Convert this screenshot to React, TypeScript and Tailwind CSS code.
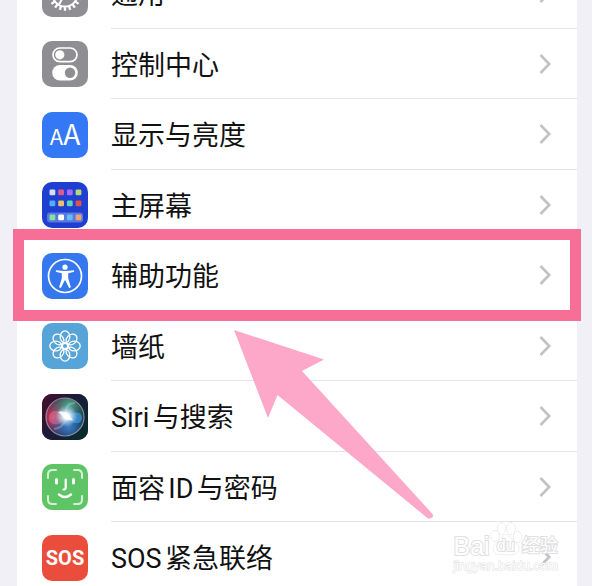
import type { ReactNode } from "react";

function GearIcon() {
  const teeth = Array.from({ length: 20 }, (_, i) => i * 18);
  return (
    <svg viewBox="0 0 46 46" className="size-full" fill="none" stroke="#fff">
      {teeth.map((a) => (
        <path key={a} d="M23 35.500v4.300" strokeWidth="2.400" transform={`rotate(${a} 23 23)`} />
      ))}
      <circle cx="23" cy="23" r="12.500" strokeWidth="2" />
      <circle cx="23" cy="23" r="5" strokeWidth="2" />
      <path d="M28 23h8M20.500 18.700l-4-6.900M20.500 27.300l-4 6.900" strokeWidth="2" />
    </svg>
  );
}

function TogglesIcon() {
  return (
    <svg viewBox="0 0 46 46" className="size-full">
      <rect x="11" y="7" width="24" height="13.600" rx="6.800" fill="none" stroke="#fff" strokeWidth="1.700" />
      <circle cx="17.800" cy="13.800" r="4.600" fill="#fff" />
      <rect x="10.200" y="24" width="25.600" height="15.400" rx="7.700" fill="#fff" />
      <circle cx="28" cy="31.700" r="5.200" fill="#8e8e93" />
    </svg>
  );
}

function HomeScreenIcon() {
  const rows = [
    ["#d9dcf5", "#e45a86", "#a96bf5", "#b3d977"],
    ["#4fb0f7", "#f0bd6a", "#63d3b4", "#e0524f"],
    ["#86e39a", "#ffffff", "#5fc0f5", "#efa273"],
  ];
  const tops = [7.5, 18.5, 32.5];
  return (
    <svg viewBox="0 0 46 46" className="size-full">
      <rect x="5" y="30.500" width="36" height="10" rx="3" fill="#5a79e0" />
      {rows.map((row, r) =>
        row.map((c, i) => (
          <rect key={c} x={7.5 + i * 8.7} y={tops[r]} width="5.800" height="5.800" rx="1.300" fill={c} />
        )),
      )}
    </svg>
  );
}

function AccessibilityIcon() {
  return (
    <svg viewBox="0 0 46 46" className="size-full" fill="#fff">
      <circle cx="23" cy="23" r="16.500" fill="none" stroke="#fff" strokeWidth="1.700" />
      <circle cx="23" cy="14.200" r="2.600" />
      <path d="M14.800 17.300q4.200 .6 8.200 .6t8.200-.6a.9.900 0 0 1 .2 1.800l-5.200 1.100v5l2.500 8.300a1 1 0 0 1-2 .7L23.400 27.500h-.8l-3.300 6.700a1 1 0 0 1-2-.7l2.500-8.300v-5l-5.200-1.100a.9.900 0 0 1 .2-1.800z" />
    </svg>
  );
}

function FlowerIcon() {
  const petals = Array.from({ length: 8 }, (_, i) => i * 45);
  return (
    <svg viewBox="0 0 46 46" className="size-full" fill="none" stroke="#fff" strokeWidth="1.300">
      {petals.map((a) => (
        <ellipse key={a} cx="23" cy="13.800" rx="4.800" ry="6" transform={`rotate(${a} 23 23)`} />
      ))}
      <circle cx="23" cy="23" r="2.700" />
    </svg>
  );
}

function SiriIcon() {
  return (
    <svg viewBox="0 0 46 46" className="size-full">
      <defs>
        <linearGradient id="siri-bg" x1="0" y1="0" x2="1" y2="0.600">
          <stop offset="0" stopColor="#4a0d2c" />
          <stop offset="0.500" stopColor="#1c1a38" />
          <stop offset="1" stopColor="#0a2a30" />
        </linearGradient>
        <radialGradient id="siri-red" cx="0.200" cy="0.500" r="0.520">
          <stop offset="0" stopColor="#e03a68" />
          <stop offset="1" stopColor="#e03a68" stopOpacity="0" />
        </radialGradient>
        <radialGradient id="siri-green" cx="0.600" cy="0.200" r="0.550">
          <stop offset="0" stopColor="#58ab94" />
          <stop offset="1" stopColor="#3f9a80" stopOpacity="0" />
        </radialGradient>
        <radialGradient id="siri-blue" cx="0.600" cy="0.750" r="0.550">
          <stop offset="0" stopColor="#3a80cc" />
          <stop offset="1" stopColor="#2f78c8" stopOpacity="0" />
        </radialGradient>
        <radialGradient id="siri-glow">
          <stop offset="0" stopColor="#fff" />
          <stop offset="0.300" stopColor="#eefcff" stopOpacity="0.900" />
          <stop offset="1" stopColor="#b8e8ff" stopOpacity="0" />
        </radialGradient>
      </defs>
      <rect width="46" height="46" fill="url(#siri-bg)" />
      <circle cx="23" cy="23" r="19" fill="url(#siri-red)" />
      <circle cx="23" cy="23" r="19" fill="url(#siri-green)" />
      <circle cx="23" cy="23" r="19" fill="url(#siri-blue)" />
      <circle cx="23" cy="23" r="19" fill="none" stroke="#c6b5c5" strokeOpacity="0.650" strokeWidth="1.200" />
      <path d="M25 24C20 16 8 14 7 23s11 10 18 1z" fill="#f07f98" fillOpacity="0.400" />
      <path d="M25 23c6-6 15-6 15 1s-10 7-15-1z" fill="#4aa4ee" fillOpacity="0.600" />
      <path d="M25 23C22 14 26 9 33 9M25 23c-3 8-8 12-13 12" stroke="#a9dcd5" strokeOpacity="0.350" strokeWidth="2" fill="none" />
      <circle cx="24.500" cy="22" r="11" fill="url(#siri-glow)" />
      <path d="M16 18q6-2 10 2 3 3 5 6-5 1-8-1-3-4-7-7z" fill="#fff" fillOpacity="0.800" />
    </svg>
  );
}

function FaceIcon() {
  return (
    <svg viewBox="0 0 46 46" className="size-full" fill="none" stroke="#fff" strokeLinecap="round">
      <path
        d="M6 14v-3.500q0-4.500 4.500-4.500H14M32 6h3.500q4.500 0 4.500 4.500V14M40 32v3.500q0 4.500-4.500 4.500H32M14 40h-3.500Q6 40 6 35.500V32"
        strokeWidth="2"
        strokeOpacity="0.750"
      />
      <path d="M14.500 15.500v3.500M31.500 15.500v3.500" strokeWidth="3" />
      <path d="M23.700 15.500v8q0 2-2.200 2" strokeWidth="2.200" />
      <path d="M17 30.500q6 5 12 0" strokeWidth="2.400" />
    </svg>
  );
}

function LettersIcon() {
  return (
    <span className="flex items-baseline pb-1 font-['Noto_Sans_CJK_SC',sans-serif] leading-none text-white">
      <span className="text-[22px]">A</span>
      <span className="text-[28px]">A</span>
    </span>
  );
}

function SosIcon() {
  return (
    <span className="font-[Roboto,sans-serif] text-[20px] leading-none font-bold text-white">
      SOS
    </span>
  );
}

type Item = { label: string; tile: string; icon: ReactNode; highlighted?: boolean };

const items: Item[] = [
  { label: "通用", tile: "bg-[#8e8e93]", icon: <GearIcon /> },
  { label: "控制中心", tile: "bg-[#8e8e93]", icon: <TogglesIcon /> },
  { label: "显示与亮度", tile: "bg-[#3478f6]", icon: <LettersIcon /> },
  { label: "主屏幕", tile: "bg-[#1f3fd0]", icon: <HomeScreenIcon /> },
  { label: "辅助功能", tile: "bg-[#3577ef]", icon: <AccessibilityIcon />, highlighted: true },
  { label: "墙纸", tile: "bg-[#57a5d8]", icon: <FlowerIcon /> },
  { label: "Siri与搜索", tile: "bg-[#1c1a38]", icon: <SiriIcon /> },
  { label: "面容ID与密码", tile: "bg-[#5ec466]", icon: <FaceIcon /> },
  { label: "SOS紧急联络", tile: "bg-[#eb4d3d]", icon: <SosIcon /> },
];

function Row({ label, tile, icon, highlighted }: Item) {
  return (
    <li className="relative odd:h-[71px] even:h-[70px]">
      <a href="#" className="flex h-full items-center pl-[25px]">
        <span
          aria-hidden="true"
          className={`flex size-[46px] shrink-0 items-center justify-center overflow-hidden rounded-[10px] ${tile}`}
        >
          {icon}
        </span>
        <span className="ml-[23px] flex h-full flex-1 items-center justify-between border-b border-[#e4e4e7] pr-[26px]">
          <span className="pt-1 [text-autospace:normal]">{label}</span>
          <svg
            viewBox="0 0 12 20"
            className="h-5 w-3"
            fill="none"
            stroke="#c2c2c4"
            strokeWidth="2.600"
            aria-hidden="true"
          >
            <path d="M1.500 1l8.700 9-8.700 9" />
          </svg>
        </span>
      </a>
      {highlighted && (
        <div className="pointer-events-none absolute -inset-x-1 -top-[11px] -bottom-[10px] z-10 border-[11px] border-[#f76f96]" />
      )}
    </li>
  );
}

function Watermark() {
  return (
    <div className="pointer-events-none absolute right-[34px] bottom-3 flex flex-col items-center font-['Liberation_Sans','Noto_Sans_CJK_SC',sans-serif] text-white [paint-order:stroke_fill] [-webkit-text-stroke:2px_#e0e0e1]">
      <div className="flex items-end text-[25px] leading-6">
        <span>Bai</span>
        <span className="relative flex h-9 w-8 items-end justify-center">
          <svg viewBox="0 0 32 36" className="absolute inset-0 size-full" fill="#fff" stroke="#dededf">
            <path d="M16 13c-4 0-5 4-8 7-4 3-6 6-4 9.500 3 4 8 3 12 3s9 1 12-3c2-3.500 0-6.500-4-9.500-3-3-4-7-8-7z" />
            <ellipse cx="5" cy="14" rx="4" ry="5.500" />
            <ellipse cx="11.500" cy="6.500" rx="4" ry="6" />
            <ellipse cx="21" cy="6.500" rx="4" ry="6" />
            <ellipse cx="27.500" cy="15" rx="4" ry="5.500" />
          </svg>
          <span className="relative text-[16px]">du</span>
        </span>
        <span className="text-[18px]">经验</span>
      </div>
      <span className="text-[13px] leading-4 [-webkit-text-stroke:1px_#e0e0e1]">jingyan.baidu.com</span>
    </div>
  );
}

export default function App() {
  return (
    <main className="relative h-screen overflow-hidden bg-[#f0f0f6] pr-[15px] pl-[17px] font-[Roboto,'Noto_Sans_CJK_SC',sans-serif] text-[27px] leading-10 text-[#111]">
      <ul className="-mt-[42px] bg-white">
        {items.map((item) => (
          <Row key={item.label} {...item} />
        ))}
      </ul>
      <svg
        viewBox="0 0 200 190"
        className="pointer-events-none absolute top-[330px] left-[234px] z-20 h-[190px] w-[200px]"
        fill="#fda8c9"
        aria-hidden="true"
      >
        <path d="M0 0L90 29.500 68 41 198.500 184q2 5-4.500 4.500L43.500 65 34 88z" />
      </svg>
      <Watermark />
    </main>
  );
}
